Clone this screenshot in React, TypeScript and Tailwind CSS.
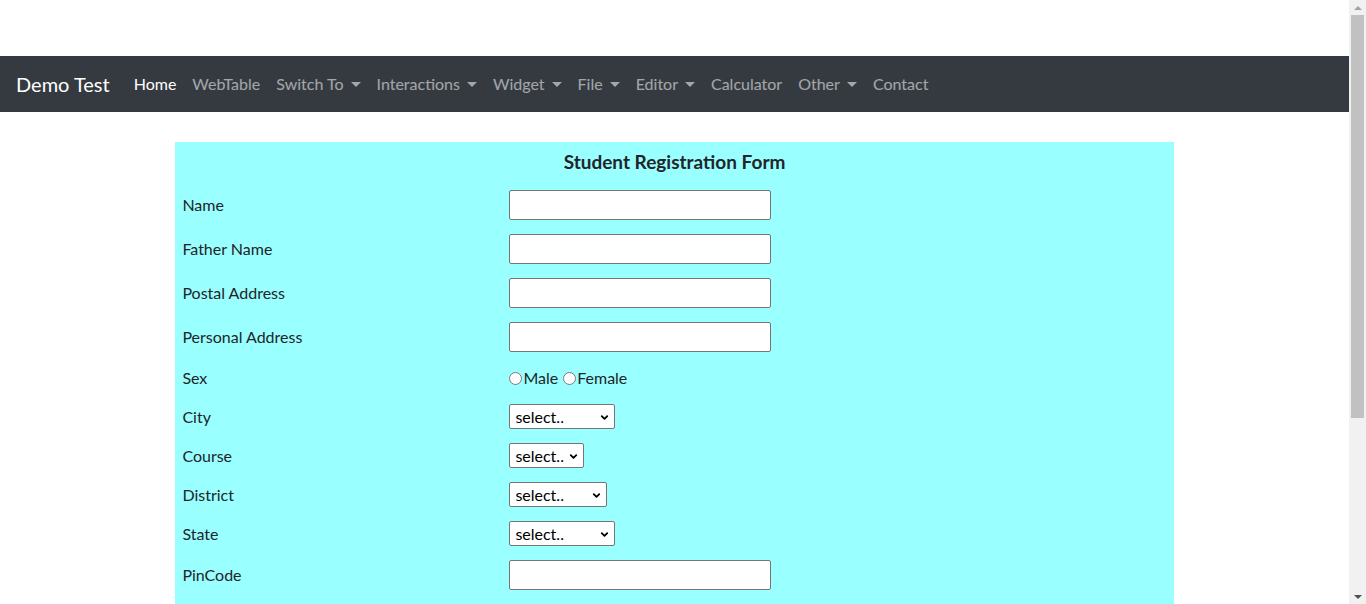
import { ChevronDown } from "lucide-react";

const navItems = [
    { label: "Home", active: true },
    { label: "WebTable" },
    { label: "Switch To", caret: true },
    { label: "Interactions", caret: true },
    { label: "Widget", caret: true },
    { label: "File", caret: true },
    { label: "Editor", caret: true },
    { label: "Calculator" },
    { label: "Other", caret: true },
    { label: "Contact" },
];

function TextRow({ label }: { label: string }) {
    return (
        <div className="grid grid-cols-[334px_1fr] items-center py-[7px]">
            <span className="pl-[7px]">{label}</span>
            <input type="text" className="w-[262px] h-[30px] bg-white border border-[#767676] rounded-[2px] px-1" />
        </div>
    );
}

function SelectRow({ label, width }: { label: string; width: string }) {
    return (
        <div className="grid grid-cols-[334px_1fr] items-center py-[7px]">
            <span className="pl-[7px]">{label}</span>
            <div className={`relative h-[25px] bg-white border border-[#767676] rounded-[2px] flex items-center pl-[5px] text-black ${width}`}>
                select..
                <ChevronDown className="absolute right-[4px] top-[7px]" size={11} strokeWidth={4} />
            </div>
        </div>
    );
}

export default function App() {
    return (
        <div className="h-[604px] overflow-hidden flex bg-white text-[#212529] text-[16px] font-['Lato','Liberation_Sans',sans-serif]">

            <div className="flex-1">
                <div className="h-14" />

                {/* Navbar */}
                <nav className="h-14 bg-[#343a40] flex items-center px-4">
                    <span className="text-white text-[20px] mr-4">Demo Test</span>
                    <div className="flex items-center">
                        {navItems.map((item) => (
                            <span
                                key={item.label}
                                className={`px-2 flex items-center ${item.active ? "text-white" : "text-white/55"}`}
                            >
                                {item.label}
                                {item.caret && (
                                    <span className="ml-[7px] w-0 h-0 border-l-[5px] border-r-[5px] border-t-[5px] border-l-transparent border-r-transparent border-t-current" />
                                )}
                            </span>
                        ))}
                    </div>
                </nav>

                {/* Form */}
                <div className="w-[74%] mx-auto mt-[30px] bg-[#99ffff] pb-4">
                    <div className="h-[41px] flex items-center justify-center font-bold text-[19px]">
                        Student Registration Form
                    </div>
                    <TextRow label="Name" />
                    <TextRow label="Father Name" />
                    <TextRow label="Postal Address" />
                    <TextRow label="Personal Address" />
                    <div className="grid grid-cols-[334px_1fr] items-center py-[7px] h-[38px]">
                        <span className="pl-[7px]">Sex</span>
                        <div className="flex items-center">
                            <input type="radio" name="sex" className="w-[13px] h-[13px] mr-px" />
                            <span className="mr-[5px]">Male</span>
                            <input type="radio" name="sex" className="w-[13px] h-[13px] mr-px" />
                            <span>Female</span>
                        </div>
                    </div>
                    <SelectRow label="City" width="w-[106px]" />
                    <SelectRow label="Course" width="w-[75px]" />
                    <SelectRow label="District" width="w-[98px]" />
                    <SelectRow label="State" width="w-[106px]" />
                    <TextRow label="PinCode" />
                </div>
            </div>

            {/* Scrollbar */}
            <div className="w-[17px] bg-[#f1f1f1] flex flex-col items-center">
                <div className="h-[15px] flex items-center justify-center">
                    <span className="w-0 h-0 border-l-[4px] border-r-[4px] border-b-[4px] border-l-transparent border-r-transparent border-b-[#a3a3a3]" />
                </div>
                <div className="w-[13px] h-[403px] bg-[#c1c1c1]" />
                <div className="flex-1" />
                <div className="h-[15px] flex items-center justify-center">
                    <span className="w-0 h-0 border-l-[4px] border-r-[4px] border-t-[4px] border-l-transparent border-r-transparent border-t-[#505050]" />
                </div>
            </div>

        </div>
    );
}
